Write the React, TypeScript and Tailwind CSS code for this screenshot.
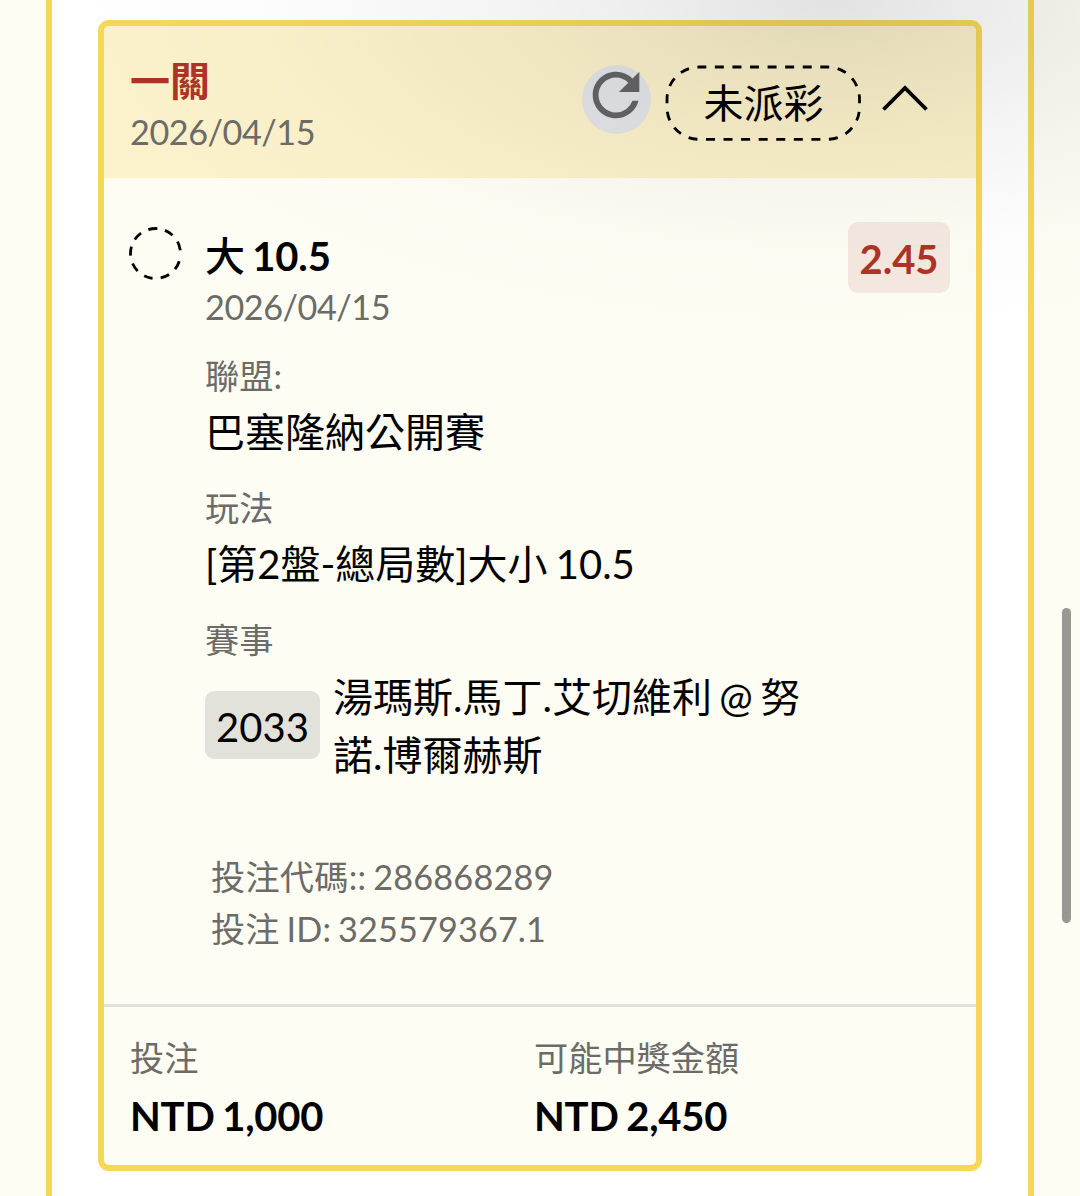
import type { ReactNode } from 'react';
import { MdRefresh } from 'react-icons/md';

const details = [
  { label: '聯盟:', value: '巴塞隆納公開賽' },
  { label: '玩法', value: '[第2盤-總局數]大小 10.5' },
];

const totals = [
  { label: '投注', value: 'NTD 1,000' },
  { label: '可能中獎金額', value: 'NTD 2,450' },
];

export default function App() {
  return (
    <div className="relative flex h-[1196px] w-[1080px] justify-center overflow-hidden bg-[#fefdf4] font-['Lato','Noto_Sans_CJK_TC',sans-serif] text-[40px] text-black [word-spacing:-2px]">
      <div className="w-[988px] border-x-[6px] border-[#f5d858] bg-white px-[46px] pt-[20px]">
        <div className="h-[1151px] overflow-hidden rounded-[11px] border-[6px] border-[#f5d858] bg-[#fefdf4]">
          <CardHeader />
          <BetDetails />
          <div className="flex h-[158px] border-t-[3px] border-[#e2e1da] px-[26px] pt-[25px]">
            {totals.map((item) => (
              <div key={item.label} className="w-[404px]">
                <Label>{item.label}</Label>
                <div className="h-[64px] whitespace-nowrap font-bold leading-[64px] tracking-[-0.2px]">{item.value}</div>
              </div>
            ))}
          </div>
        </div>
      </div>

      {/* Soft shade falling from the top edge */}
      <div className="pointer-events-none absolute inset-0 bg-[radial-gradient(ellipse_780px_340px_at_830px_0px,rgba(0,0,0,0.115),rgba(0,0,0,0.075)_20%,rgba(0,0,0,0.042)_42%,rgba(0,0,0,0.013)_72%,transparent)]" />
      {/* Scroll thumb */}
      <div className="absolute right-[9px] top-[608px] h-[315px] w-[9px] rounded-full bg-[#999893]" />
    </div>
  );
}

function CardHeader() {
  return (
    <div className="flex h-[152px] bg-[#fbf1cb] pl-[26px] pr-[48px]">
      <div className="flex-1 pt-[29px]">
        <div className="h-[51px] font-bold leading-[52px] text-[#ac3426]">一關</div>
        <Label className="tracking-[-0.45px]">2026/04/15</Label>
      </div>
      <div className="flex items-start pt-[39px]">
        <button className="flex h-[69px] w-[69px] items-center justify-center rounded-full bg-[#e3e4e7] text-[#646466]">
          <MdRefresh className="mb-[9px] mr-px h-[70px] w-[70px] shrink-0" />
        </button>
        <div className="relative ml-[14px] flex h-[76px] w-[197px] items-center justify-center">
          <svg className="absolute inset-0" width="197" height="76" fill="none">
            <rect x="2" y="2" width="192.5" height="72.3" rx="32" stroke="#000" strokeWidth="2.8" strokeDasharray="9 8.57" strokeDashoffset="1.7" />
          </svg>
          <span className="leading-[60px]">未派彩</span>
        </div>
        <svg className="ml-[20px] mt-[19px]" width="46" height="28" fill="none">
          <path d="M1.5 25.5L23 4L44.5 25.5" stroke="#000" strokeWidth="3.8" />
        </svg>
      </div>
    </div>
  );
}

function BetDetails() {
  return (
    <div className="flex h-[826px] pl-[25px] pr-[26px]">
      <svg className="mt-[49px] shrink-0" width="54" height="54" fill="none">
        <circle
          cx="26.5"
          cy="26.5"
          r="25"
          stroke="#000"
          strokeWidth="2.8"
          strokeDasharray="9 8 9 8 9 8 9 8 9 8 9 8 9 8 9 8 9 100"
          transform="rotate(18 26.5 26.5)"
        />
      </svg>
      <div className="ml-[22px] flex-1 pt-[53px]">
        <div className="h-[50px] font-bold leading-[50px] tracking-[-0.2px]">
          <span className="font-medium">大</span> 10.5
        </div>
        <Label className="tracking-[-0.45px]">2026/04/15</Label>
        <div className="mt-[17px]">
          {details.map((item) => (
            <div key={item.label} className="mb-[20px]">
              <Label>{item.label}</Label>
              <div className="h-[60px] whitespace-nowrap leading-[60px]">{item.value}</div>
            </div>
          ))}
        </div>
        <Label>賽事</Label>
        <div className="flex h-[118px] items-center">
          <div className="flex h-[68px] w-[115px] items-center justify-center rounded-[9px] bg-[#e3e2da] pt-[3px]">2033</div>
          <div className="ml-[13px] whitespace-nowrap pt-[2px] leading-[58px] [word-spacing:-2.8px]">
            湯瑪斯.馬丁.艾切維利 @ 努
            <br />
            諾.博爾赫斯
          </div>
        </div>
        <div className="ml-[6px] mt-[67px]">
          <Label className="tracking-[0.22px]">投注代碼:: 286868289</Label>
          <Label className="tracking-[0.15px]">投注 ID: 325579367.1</Label>
        </div>
      </div>
      <div className="mt-[44px] flex h-[71px] w-[102px] items-center justify-center rounded-[10px] bg-[#f5e8e1] pt-[2px] font-bold text-[#ac3426]">
        2.45
      </div>
    </div>
  );
}

function Label({ children, className = '' }: { children: ReactNode; className?: string }) {
  return <div className={`h-[52px] whitespace-nowrap text-[34.2px] leading-[52px] text-[#6c6b67] ${className}`}>{children}</div>;
}
